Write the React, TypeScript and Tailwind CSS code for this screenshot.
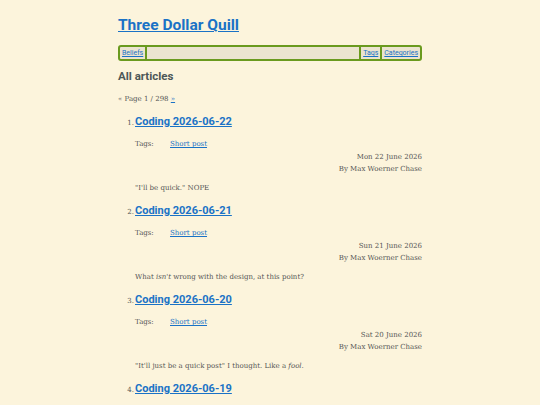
const posts = [
  {
    n: 1,
    title: "Coding 2026-06-22",
    date: "Mon 22 June 2026",
    excerpt: <>"I'll be quick." NOPE</>,
  },
  {
    n: 2,
    title: "Coding 2026-06-21",
    date: "Sun 21 June 2026",
    excerpt: (
      <>
        What <em>isn't</em> wrong with the design, at this point?
      </>
    ),
  },
  {
    n: 3,
    title: "Coding 2026-06-20",
    date: "Sat 20 June 2026",
    excerpt: (
      <>
        "It'll just be a quick post" I thought. Like a <em>fool</em>.
      </>
    ),
  },
  {
    n: 4,
    title: "Coding 2026-06-19",
  },
]

const sans = "font-['Roboto',sans-serif]"
const serif = "font-['DejaVu_Serif',serif]"

export default function App() {
  return (
    <div className={`h-[405px] overflow-hidden bg-[#fcf4dc] text-[#555] ${serif}`}>
      <div className="w-[304px] mx-auto pt-[13px]">
        {/* cabecera */}
        <h1 className={`${sans} text-[15.5px] leading-[24px] font-bold text-[#1a72c6] underline`}>
          <a href="#">Three Dollar Quill</a>
        </h1>

        <nav className={`${sans} mt-[8px] flex h-[16px] items-stretch border-2 border-[#6a9a1e] rounded-[3px] bg-[#ebe4cf] text-[7px] leading-[12px]`}>
          <a href="#" className="px-[2px] text-[#1a72c6] underline border-r-2 border-[#6a9a1e]">Beliefs</a>
          <span className="flex-1" />
          <a href="#" className="px-[2px] text-[#1a72c6] underline border-l-2 border-[#6a9a1e]">Tags</a>
          <a href="#" className="px-[2px] text-[#1a72c6] underline border-l-2 border-[#6a9a1e]">Categories</a>
        </nav>

        <h2 className={`${sans} mt-[7px] text-[11.5px] leading-[16px] font-bold text-[#4c5757]`}>All articles</h2>

        <p className="mt-[10px] text-[7px] leading-[10px]">
          « Page 1 / 298 <a href="#" className="text-[#1a72c6] underline">»</a>
        </p>

        <ol className="mt-[9px]">
          {posts.map((p) => (
            <li key={p.n} className="flex flex-col mb-[8px]">
              <div className="flex items-baseline">
                <span className="w-[17px] text-right pr-[1px] text-[7px]">{p.n}.</span>
                <a href="#" className={`${sans} text-[11px] leading-[18px] font-bold text-[#1a72c6] underline`}>
                  {p.title}
                </a>
              </div>
              {p.date && (
                <div className="pl-[17px] text-[7px] leading-[12px]">
                  <div className="mt-[7px] flex">
                    <span className="w-[35px]">Tags:</span>
                    <a href="#" className="text-[#1a72c6] underline">Short post</a>
                  </div>
                  <div className="mt-[1px] text-right">{p.date}</div>
                  <div className="text-right">By Max Woerner Chase</div>
                  <p className="mt-[7px]">{p.excerpt}</p>
                </div>
              )}
            </li>
          ))}
        </ol>
      </div>
    </div>
  )
}
